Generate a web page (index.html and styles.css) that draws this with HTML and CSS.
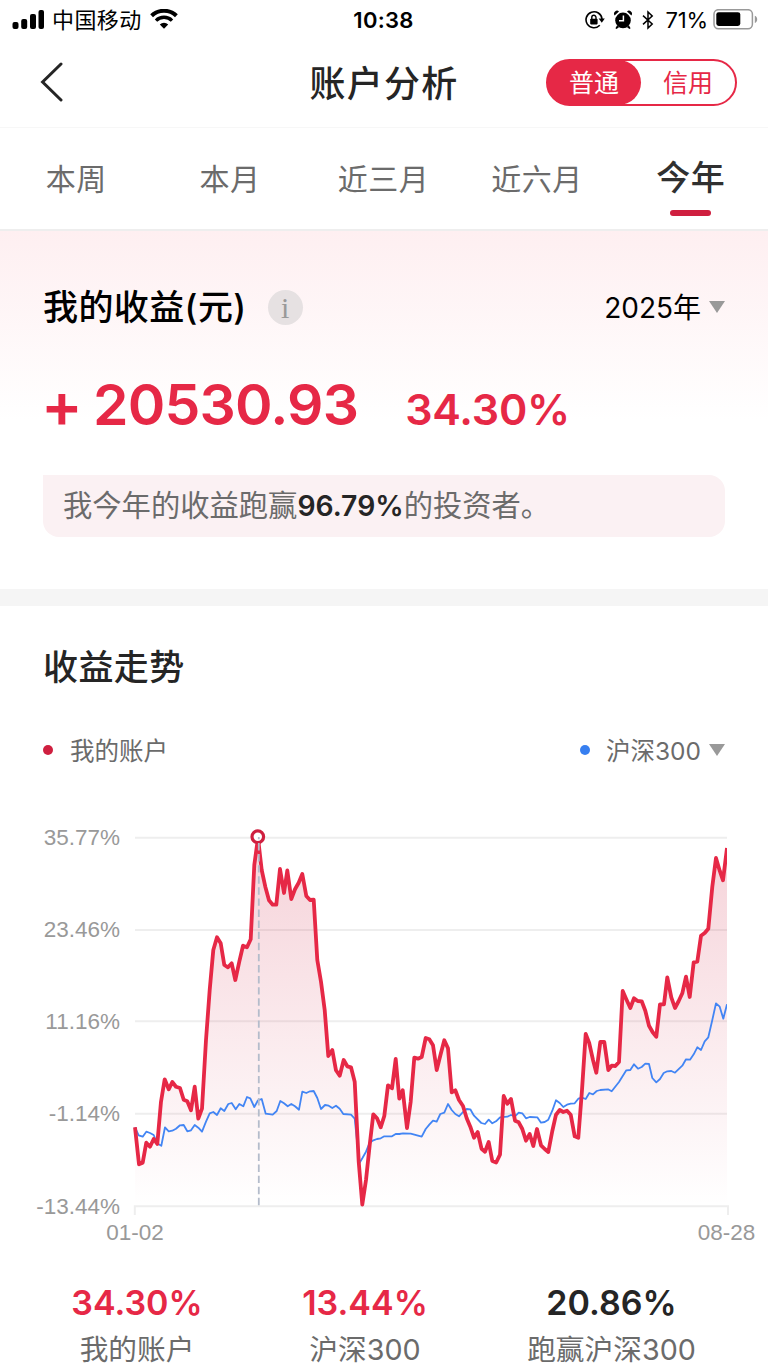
FILE: index.html
```html
<!DOCTYPE html>
<html lang="zh-CN">
<head>
    <meta charset="UTF-8">
    <meta name="viewport" content="width=device-width, initial-scale=1.0">
    <title>账户分析</title>
    <link rel="stylesheet" href="styles.css">
</head>
<body>
    <div class="status-bar">
        <div class="status-left">
            <svg class="signal" width="33" height="20" viewBox="0 0 33 20">
                <rect x="0.5" y="12" width="6" height="7" rx="2"/>
                <rect x="9.2" y="9" width="6" height="10" rx="2"/>
                <rect x="18" y="4" width="6" height="15" rx="2"/>
                <rect x="26.5" y="0" width="5.5" height="19" rx="2"/>
            </svg>
            <span class="carrier">中国移动</span>
            <svg class="wifi" width="30" height="22" viewBox="0 0 30 22">
                <path d="M2.6 6.8a17.8 17.8 0 0 1 24.8 0" fill="none" stroke="#000" stroke-width="4"/>
                <path d="M7 11.6a11.4 11.4 0 0 1 16 0" fill="none" stroke="#000" stroke-width="3.4"/>
                <path d="M10.8 15.4a6.4 6.4 0 0 1 8.4 0L15 19.8z"/>
            </svg>
        </div>
        <div class="status-time">10:38</div>
        <div class="status-right">
            <svg width="20" height="20" viewBox="0 0 20 20">
                <path d="M14.8 15.3A8 8 0 1 1 17 9" fill="none" stroke="#000" stroke-width="1.6"/>
                <path d="M13.6 8.6h6.2l-3 4.2z"/>
                <rect x="5.2" y="8.8" width="7.4" height="5.6" rx="0.8"/>
                <path d="M6.8 9V7.4a2.1 2.1 0 0 1 4.2 0V9" fill="none" stroke="#000" stroke-width="1.4"/>
            </svg>
            <svg class="alarm" width="18" height="20" viewBox="0 0 18 20">
                <circle cx="9" cy="10.4" r="7.8"/>
                <path d="M0.6 5.4A3 3 0 0 1 5 1.4zM17.4 5.4A3 3 0 0 0 13 1.4zM3 15.6l-1.6 2.6 1.2.8 2.6-2zM15 15.6l1.6 2.6-1.2.8-2.6-2z"/>
                <path d="M9.4 5.4v5.4H5" fill="none" stroke="#fff" stroke-width="1.5"/>
            </svg>
            <svg class="bluetooth" width="12" height="20" viewBox="0 0 12 20">
                <path d="M1 5.6l9.2 8.4L6 18V2l4.2 4L1 14.4" fill="none" stroke="#000" stroke-width="1.5"/>
            </svg>
            <span class="percent">71%</span>
            <svg class="battery" width="46" height="22" viewBox="0 0 46 22">
                <rect x="1" y="0.7" width="38.4" height="19" rx="4.4" fill="none" stroke="#999" stroke-width="1.5"/>
                <rect x="3.3" y="3.2" width="24" height="13.8" rx="2.4"/>
                <path d="M41.8 6.7c3.2 1 3.2 6.2 0 7.2z" fill="#999"/>
            </svg>
        </div>
    </div>

    <header>
        <a href="#" class="back">
            <svg width="24" height="40" viewBox="0 0 24 40">
                <path d="M21 2L2.6 20 21 38" fill="none" stroke="#252525" stroke-width="3" stroke-linecap="round"/>
            </svg>
        </a>
        <h1>账户分析</h1>
        <div class="switch">
            <span class="switch-item active">普通</span>
            <span class="switch-item">信用</span>
        </div>
    </header>

    <nav>
        <a href="#">本周</a>
        <a href="#">本月</a>
        <a href="#">近三月</a>
        <a href="#">近六月</a>
        <a href="#" class="active">今年</a>
    </nav>

    <main>
        <section class="earnings">
            <div class="earnings-head">
                <h2>我的收益(元)</h2>
                <span class="info">i</span>
                <span class="year">2025年</span>
                <i class="arrow"></i>
            </div>
            <div class="earnings-value">
                <span class="plus">+</span>
                <span class="amount">20530.93</span>
                <span class="rate">34.30%</span>
            </div>
            <p class="tip">我今年的收益跑赢<b>96.79%</b>的投资者。</p>
        </section>

        <section class="trend">
            <h2>收益走势</h2>
            <div class="legend">
                <i class="dot dot-red"></i>
                <span>我的账户</span>
                <i class="dot dot-blue"></i>
                <span>沪深300</span>
                <i class="arrow"></i>
            </div>

            <svg class="chart" width="768" height="450" viewBox="0 800 768 450">
                <defs>
                    <linearGradient id="area" gradientUnits="userSpaceOnUse" x1="0" y1="837" x2="0" y2="1206">
                        <stop offset="0" stop-color="#cf1f3f" stop-opacity="0.2"/>
                        <stop offset="1" stop-color="#cf1f3f" stop-opacity="0"/>
                    </linearGradient>
                    <clipPath id="plot">
                        <rect x="133" y="820" width="594" height="387"/>
                    </clipPath>
                </defs>
                <g class="grid">
                    <path d="M135 837.7H727M135 930H727M135 1021.3H727M135 1113.8H727"/>
                    <path d="M134.8 1215V1206.3H728V1215"/>
                </g>
                <g clip-path="url(#plot)">
                    <path id="areaPath" fill="url(#area)"/>
                    <polyline id="indexLine" class="line-blue"/>
                    <polyline id="accountLine" class="line-red"/>
                </g>
                <circle cx="257.8" cy="836.7" r="5.8" fill="#fff" stroke="#cf1f3f" stroke-width="3.2"/>
                <path class="cursor" d="M258.8 837V1206"/>
                <g class="axis-y">
                    <text x="120" y="844.5">35.77%</text>
                    <text x="120" y="936.5">23.46%</text>
                    <text x="120" y="1029">11.16%</text>
                    <text x="120" y="1121.3">-1.14%</text>
                    <text x="120" y="1213.5">-13.44%</text>
                </g>
                <g class="axis-x">
                    <text x="135" y="1240">01-02</text>
                    <text x="726.5" y="1240">08-28</text>
                </g>
            </svg>

            <div class="summary">
                <div class="summary-item">
                    <strong>34.30%</strong>
                    <span>我的账户</span>
                </div>
                <div class="summary-item">
                    <strong>13.44%</strong>
                    <span>沪深300</span>
                </div>
                <div class="summary-item">
                    <strong class="dark">20.86%</strong>
                    <span>跑赢沪深300</span>
                </div>
            </div>
        </section>
    </main>

    <script src="chart.js"></script>
</body>
</html>
```
FILE: styles.css
```css
:root {
    --red: #e62846;
    --red-dark: #cf1f3f;
    --blue: #377ff0;
    --text: #252525;
    --gray: #6b6b6b;
    --gray-light: #999;
}

* {
    box-sizing: border-box;
}

body {
    margin: 0;
    width: 768px;
    height: 1366px;
    overflow: hidden;
    background: #fff;
    color: var(--text);
    font-family: Inter, "Noto Sans CJK SC", sans-serif;
}

h1, h2, p {
    margin: 0;
}

a {
    color: inherit;
    text-decoration: none;
}

svg {
    display: block;
    flex: none;
}

/* status bar */
.status-bar {
    display: grid;
    grid-template-columns: 1fr auto 1fr;
    align-items: center;
    height: 40px;
    padding: 0 9px 0 12px;
    color: #000;
    font-size: 22px;
    line-height: 40px;
}

.status-left,
.status-right {
    display: flex;
    align-items: center;
}

.status-right {
    justify-content: flex-end;
}

.carrier {
    margin: 0 7px 0 7px;
    letter-spacing: 0.4px;
}

.status-time {
    margin-right: 4px;
    font-weight: 600;
    letter-spacing: 0.3px;
}

.alarm {
    margin-left: 9px;
}

.bluetooth {
    margin: 0 12px 0 10px;
}

.percent {
    margin-right: 5px;
    font-size: 22px;
    letter-spacing: -0.2px;
}

/* title bar */
header {
    display: grid;
    grid-template-columns: 1fr auto 1fr;
    align-items: center;
    height: 88px;
    padding: 0 31px 2px;
    border-bottom: 1px solid #f7f7f7;
}

.back {
    margin: 0 0 2px 9px;
}

h1 {
    padding-top: 2px;
    font-size: 36px;
    font-weight: 500;
    letter-spacing: 1.2px;
    line-height: 50px;
}

.switch {
    display: flex;
    justify-self: end;
    width: 191px;
    height: 47px;
    border: 2px solid var(--red);
    border-radius: 24px;
    color: var(--red);
    font-size: 25px;
    line-height: 44px;
}

.switch-item {
    flex: 1;
    text-align: center;
}

.switch-item.active {
    margin: -1px 0 -1px -1px;
    border-radius: 24px;
    background: var(--red);
    color: #fff;
    line-height: 46px;
}

/* period tabs */
nav {
    display: grid;
    grid-template-columns: repeat(5, 1fr);
    height: 103px;
    border-bottom: 2px solid #eee;
    color: var(--gray);
    font-size: 30px;
    letter-spacing: 0.5px;
    line-height: 102px;
    text-align: center;
}

nav a {
    margin-left: -1px;
}

nav .active {
    position: relative;
    color: #303030;
    font-size: 34px;
    font-weight: 500;
    line-height: 100px;
}

nav .active::after {
    content: "";
    position: absolute;
    left: 57px;
    bottom: 14px;
    width: 41px;
    height: 6px;
    border-radius: 3px;
    background: var(--red-dark);
}

/* earnings */
.earnings {
    height: 375px;
    padding: 49px 43px 0;
    border-bottom: 17px solid #f5f5f5;
    background: linear-gradient(#feeff1, #fff 190px);
}

.earnings-head {
    display: flex;
    align-items: center;
    height: 54px;
    color: #000;
}

h2 {
    font-size: 35px;
    font-weight: 500;
    letter-spacing: 0.4px;
    line-height: 50px;
}

.info {
    width: 35px;
    height: 35px;
    margin-left: 21px;
    border-radius: 50%;
    background: #e6e1e2;
    color: #999;
    font: 30px/35px "Liberation Serif", serif;
    text-align: center;
}

.year {
    margin: -2px 0 0 auto;
    font-size: 28px;
}

.arrow {
    margin-left: 8px;
    border: 8px solid transparent;
    border-top: 12px solid var(--gray-light);
    border-bottom: 0;
}

.earnings-value {
    display: flex;
    align-items: baseline;
    height: 76px;
    margin-top: 33px;
    color: var(--red);
    font-weight: 600;
    line-height: 76px;
}

.plus {
    align-self: flex-start;
    width: 50px;
    font-size: 62px;
    line-height: 76px;
    text-indent: -2px;
}

.amount {
    font-size: 57px;
    letter-spacing: -0.8px;
}

.rate {
    margin-left: 47px;
    font-size: 43px;
    letter-spacing: -0.2px;
}

.tip {
    height: 62px;
    margin-top: 32px;
    padding-left: 20px;
    border-radius: 0 16px 16px 16px;
    background: #fbf1f3;
    color: var(--gray);
    font-size: 29.3px;
    line-height: 61px;
}

.tip b {
    color: var(--text);
    font-size: 28.3px;
    font-weight: 600;
}

/* trend */
.trend h2 {
    padding: 36px 43px 0;
}

.legend {
    display: flex;
    align-items: center;
    height: 40px;
    margin-top: 38px;
    padding: 0 43px;
    color: var(--gray);
    font-size: 24.5px;
}

.legend span {
    margin-top: -2px;
}

.dot {
    width: 10px;
    height: 10px;
    margin-right: 17px;
    border-radius: 50%;
}

.dot-red {
    background: var(--red-dark);
}

.dot-blue {
    margin-left: auto;
    margin-right: 16px;
    background: var(--blue);
}

.chart {
    margin-top: 30px;
}

.grid path {
    fill: none;
    stroke: #eee;
    stroke-width: 2;
}

.line-red,
.line-blue {
    fill: none;
    stroke-linejoin: round;
}

.line-red {
    stroke: var(--red);
    stroke-width: 3.8;
}

.line-blue {
    stroke: #4285f4;
    stroke-width: 1.8;
}

.cursor {
    stroke: #b4bccb;
    stroke-width: 1.8;
    stroke-dasharray: 7.4 3.69;
    stroke-dashoffset: 5.1;
}

.axis-y text,
.axis-x text {
    fill: var(--gray-light);
    font-family: "Liberation Sans", Arial, sans-serif;
    font-size: 22.5px;
}

.axis-y text {
    text-anchor: end;
}

.axis-x text {
    text-anchor: middle;
}

.summary {
    display: flex;
    padding: 30px 0 0 23px;
}

.summary-item {
    display: flex;
    flex-direction: column;
    align-items: center;
    width: 228px;
    color: var(--gray);
    font-size: 28.7px;
    line-height: 46px;
}

.summary-item:last-child {
    width: 265px;
}

.summary-item strong {
    margin-bottom: 2px;
    color: var(--red);
    font-size: 34px;
    font-weight: 600;
    line-height: 45px;
}

.summary-item .dark {
    color: var(--text);
}
```
FILE: chart.js
```js
const account = [
    [135,1127.3],[139,1164.3],[142.7,1162.7],[146.3,1142.7],[150,1146.7],[153.7,1139],[157.3,1144],[161,1101.7],
    [164.7,1079.3],[168.7,1089.3],[172.3,1082],[176,1086.7],[180,1088],[183.7,1099.7],[187.3,1101.3],[191,1110.3],
    [194.7,1086.7],[198.3,1118.7],[202,1108.7],[206,1040],[209.7,990],[213.3,950],[217,937.3],[220.7,943.3],
    [224.3,965],[228,967.3],[231.7,963.3],[235.3,980],[239.3,961.7],[243,945.7],[247,947.3],[250.7,939.3],
    [254.3,865],[258,838],[261.7,870],[265.3,886.7],[269,900.3],[272.7,904.7],[276.3,904.7],[280,869],
    [284,893],[287.3,870.5],[291.3,899],[295,889.3],[298.7,882.7],[302.3,874],[306.3,896],[310,900],
    [313.7,899.7],[317.3,960],[321,981.7],[324.7,1010],[328.3,1056],[332.3,1050],[336,1070.3],[339.7,1075.7],
    [343.7,1060],[347.3,1066.3],[351,1067.3],[354.7,1081.7],[358.7,1161.7],[362.3,1204.5],[366,1180],[369.7,1145],
    [373.3,1114.3],[377,1118.3],[380.7,1127.3],[384.3,1116],[388,1085.3],[392,1088.3],[395.7,1059],[399.3,1098.7],
    [402.7,1090.3],[407,1128],[410.7,1101.7],[414.3,1057.7],[418,1058.7],[421.7,1057],[425.7,1038],[429.3,1039.3],
    [433,1045.3],[436.7,1070],[440.7,1054],[444.3,1040.3],[448,1048.3],[451.7,1092.3],[455.3,1090.3],[459,1100],
    [463,1106],[466.7,1118.3],[470.3,1126.7],[474,1137.7],[477.7,1132],[481.5,1148.7],[485,1151.7],[488.7,1142],
    [492.3,1161],[496.2,1162.5],[500,1154.7],[503.7,1096],[507.3,1103.7],[511,1099],[515,1120.7],[518.7,1122.3],
    [522.3,1129],[526,1140.7],[529.7,1134],[533.3,1146],[537,1129],[541,1145.3],[544.7,1149],[548.3,1152],
    [552.3,1131],[556,1114.7],[559.7,1110],[563.3,1112],[567,1110.7],[570.7,1114.7],[574.7,1136.3],[578.3,1137.7],
    [582,1090],[585.7,1034],[589.3,1043.3],[593,1060],[596.3,1072.7],[600.3,1042],[604.3,1042],[608.3,1070],
    [611.7,1065.7],[615.3,1066],[619,1062],[622.7,991],[626.3,999.3],[630.3,1008],[634,998.3],[637.7,1001],
    [641.7,1001.3],[645.3,1010.7],[649,1025.7],[652.7,1032.3],[656.3,1036.7],[660,1004.3],[664,1004.3],[667.3,977.3],
    [671.3,997.3],[675,1008],[678.7,1001],[682.3,993.3],[686,976.7],[689.7,997],[693.7,962.3],[697.3,961.7],
    [701,935.7],[704.7,933],[708.3,928.7],[712.3,886.7],[716,858],[719.7,870.7],[723,880.3],[727,848]
];

const csi300 = [
    [135,1127.3],[138.7,1135.3],[142.7,1136.7],[146.3,1131.7],[150,1133],[153.7,1135],[157.3,1143.5],[161.3,1145.7],
    [165,1127.3],[168.7,1131.3],[172.3,1130.7],[176,1128.7],[180,1125.3],[183.7,1125],[187.3,1131.3],[191,1130.3],
    [194.7,1125],[198.3,1127.7],[202,1131.7],[206,1121.7],[209.7,1113.3],[213.3,1112],[217,1115],[220.7,1108.3],
    [224.3,1111],[228.3,1104],[231.7,1103],[235.7,1109.3],[239.3,1104],[243.3,1106.3],[247,1097],[250.3,1098.3],
    [254.3,1107],[258,1100.3],[261.7,1099],[265.7,1113.7],[272.7,1114.7],[276.7,1111],[280.3,1101],[284,1103.3],
    [287.7,1106.3],[291.3,1104],[295,1106.3],[299,1109.7],[302.3,1091.7],[306.3,1093],[310,1091.3],[313.7,1091],
    [317.3,1098],[321,1109],[325,1105],[328.7,1105.7],[332.3,1108],[336,1105.7],[339.7,1108.7],[343.3,1114],
    [351,1114.7],[354.7,1118.7],[359.3,1163.3],[362.3,1158.3],[366,1151.7],[369.7,1142.7],[373.3,1140.3],[377,1139],
    [380.7,1138.3],[384.3,1136.3],[392,1136.3],[395.7,1134],[399.3,1134],[403,1133.3],[410.7,1133.7],[421.7,1136.7],
    [425.7,1129],[429.3,1124.7],[433,1120.7],[436.7,1121.7],[440.3,1114],[444.3,1112.7],[448,1104],[451.7,1110],
    [455.3,1114],[459,1116.3],[463,1112],[466.7,1109],[470.3,1109.3],[474,1115.7],[481.3,1123],[485,1124],
    [488.7,1119.7],[492.3,1123.3],[496,1121.3],[500,1117.3],[507.3,1116.7],[511,1115],[515,1116.3],[518.7,1112.7],
    [522.3,1113.3],[526,1118.3],[529.7,1117],[537.3,1117.3],[541,1122.7],[544.7,1122],[548.3,1119.7],[552.3,1110.7],
    [556,1100.3],[559.7,1103],[563.3,1107],[567,1104.7],[570.7,1103.7],[574.7,1103.3],[578.3,1098.7],[582,1097.7],
    [585.7,1099],[589.3,1093],[593,1094.3],[596.7,1091],[600.3,1090],[608,1089.3],[611.7,1091.3],[619,1082],
    [626.3,1070.3],[630.3,1070],[634,1064.3],[638,1068.7],[641.7,1067],[645.3,1063.7],[649,1064],[652.3,1078],
    [656.3,1082.3],[660,1079],[663.7,1073],[667.3,1071.3],[671.3,1071],[675,1072.7],[682.3,1065.7],[686,1059.3],
    [690,1059.7],[693.7,1054.3],[697.3,1047.3],[701,1050],[704.7,1041.3],[708.3,1037.3],[712.3,1020],[716,1003.3],
    [719.7,1006.7],[723.3,1018.7],[727,1004.3]
];

document.getElementById('accountLine').setAttribute('points', account.join(' '));
document.getElementById('indexLine').setAttribute('points', csi300.join(' '));
document.getElementById('areaPath').setAttribute('d', 'M135 1206L' + account.join(' ') + ' 727 1206z');
```
